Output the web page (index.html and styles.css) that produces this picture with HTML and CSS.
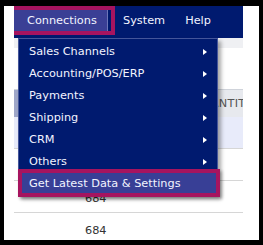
FILE: index.html
```html
<!DOCTYPE html>
<html>
<head>
<meta charset="utf-8">
<link rel="stylesheet" href="styles.css">
</head>
<body>
<div class="frame">
  <div class="app">
    <nav class="navbar">
      <div class="tab active">Connections</div>
      <div class="tab system">System</div>
      <div class="tab help">Help</div>
    </nav>
    <div class="strip"></div>
    <div class="toolbar"></div>
    <div class="thead">
      <div class="th sorted"></div>
      <div class="th qty">QUANTITY</div>
    </div>
    <div class="row alt"><div class="c1"></div><div class="c2"></div></div>
    <div class="row"><div class="c1"></div><div class="c2">684</div></div>
    <div class="row"><div class="c1"></div><div class="c2">684</div></div>
    <div class="row last"><div class="c1"></div><div class="c2">684</div></div>

    <ul class="menu">
      <li class="item sub">Sales Channels</li>
      <li class="item sub">Accounting/POS/ERP</li>
      <li class="item sub">Payments</li>
      <li class="item sub">Shipping</li>
      <li class="item sub">CRM</li>
      <li class="item sub">Others</li>
      <li class="item hl">Get Latest Data &amp; Settings</li>
    </ul>
  </div>
</div>
</body>
</html>
```
FILE: styles.css
```css
* { box-sizing: border-box; }
html, body { margin: 0; padding: 0; background: #000; }
body { width: 263px; height: 245px; overflow: hidden; font-family: "DejaVu Sans", Verdana, sans-serif; }

.frame {
  width: 263px;
  height: 245px;
  border-style: solid;
  border-color: #000;
  border-width: 6px 4px 5px 4px;
  background: #fff;
  overflow: hidden;
}

.app {
  position: relative;
  margin-left: 10px;
  width: 229px;
  overflow: hidden;
  height: 234px;
}

.navbar {
  display: flex;
  height: 32px;
  background: #001a6f;
  color: #f2f4ff;
  font-size: 11.3px;
}

.tab {
  height: 29px;
  line-height: 30px;
  white-space: nowrap;
}
.tab.active {
  position: relative;
  width: 94px;
  padding-left: 13px;
  background: #3a3f95;
  border-right: 1px solid #6c76b8;
}
.tab.active::after {
  content: "";
  position: absolute;
  left: -4px;
  top: 0;
  right: -8px;
  bottom: 0;
  border: 4px solid #a6145f;
}
.tab.system { padding-left: 15px; }
.tab.help { padding-left: 20px; }

.strip { height: 10px; background: #eff0f3; }
.toolbar { height: 41px; background: #fff; }

.thead {
  display: flex;
  height: 28px;
  border-top: 1px solid #cfd3da;
  background: #e7e9ee;
  font-size: 11.3px;
  color: #555;
  overflow: hidden;
}
.th { flex-shrink: 0; }
.th.sorted { width: 60px; background: #9fa7c9; }
.th.qty { padding-left: 119px; line-height: 27px; white-space: nowrap; letter-spacing: 0.3px; }

.row {
  display: flex;
  height: 32px;
  border-bottom: 1px solid #d6d6d6;
  font-size: 11.3px;
  color: #333;
}
.row.alt { background: #e8ebfa; }
.row.last { border-bottom: none; }
.c1 { width: 71px; }
.c2 { line-height: 31px; padding-top: 2px; }

.menu {
  position: absolute;
  left: 4px;
  top: 32px;
  width: 200px;
  margin: 0;
  padding: 2px 0 0 0;
  list-style: none;
  background: #001a6f;
  border: 1px solid #44559a;
  box-shadow: 3px 3px 4px rgba(0, 0, 0, 0.35);
  color: #f2f4ff;
  font-size: 11.3px;
}
.item {
  position: relative;
  height: 22px;
  line-height: 22px;
  padding-left: 10px;
  white-space: nowrap;
}
.item.sub::after {
  content: "";
  position: absolute;
  right: 10px;
  top: 7.5px;
  width: 0;
  height: 0;
  border-left: 4px solid #fff;
  border-top: 3.5px solid transparent;
  border-bottom: 3.5px solid transparent;
}
.item.hl {
  background: #383f96;
}
.item.hl::after {
  content: "";
  position: absolute;
  left: -1px;
  right: -3px;
  top: -4px;
  bottom: -2px;
  border: 4px solid #a6145f;
  box-shadow: 2px 2px 3px rgba(0, 0, 0, 0.3);
}
```
